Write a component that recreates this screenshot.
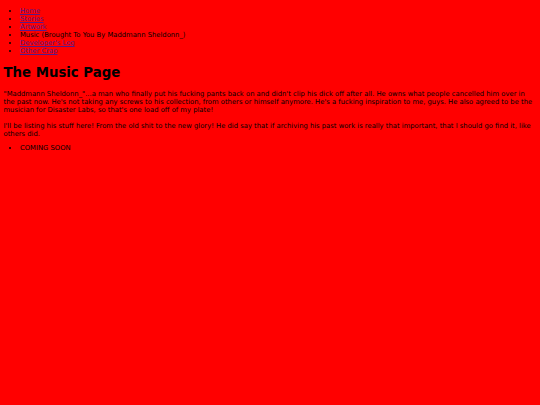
export default function App() {
  const links = ['Home', 'Stories', 'Artwork'];
  return (
    <div
      className="min-h-[405px] bg-[#ff0000] px-[3.5px] pt-[7px] text-[6.8px] leading-[8px] text-black"
      style={{ fontFamily: 'Verdana, "DejaVu Sans", sans-serif' }}
    >
      <ul className="list-disc pl-[16.5px]">
        {links.map((l) => (
          <li key={l}>
            <a href="#" className="text-[#551a8b] underline">{l}</a>
          </li>
        ))}
        <li>Music (Brought To You By Maddmann Sheldonn_)</li>
        <li>
          <a href="#" className="text-[#551a8b] underline">Developer's Log</a>
        </li>
        <li>
          <a href="#" className="text-[#551a8b] underline">Other Crap</a>
        </li>
      </ul>

      <h1 className="mt-[9.5px] text-[13.3px] font-bold leading-[15px]">The Music Page</h1>

      <p className="mt-[10.5px]">
        "Maddmann Sheldonn_"...a man who finally put his fucking pants back on and didn't clip his dick off after
        all. He owns what people cancelled him over in the past now. He's not taking any screws to his collection,
        from others or himself anymore. He's a fucking inspiration to me, guys. He also agreed to be the musician for
        Disaster Labs, so that's one load off of my plate!
      </p>

      <p className="mt-[8px]">
        I'll be listing his stuff here! From the old shit to the new glory! He did say that if archiving his past
        work is really that important, that I should go find it, like others did.
      </p>

      <ul className="mt-[5.5px] list-disc pl-[16.5px]">
        <li>COMING SOON</li>
      </ul>
    </div>
  );
}
